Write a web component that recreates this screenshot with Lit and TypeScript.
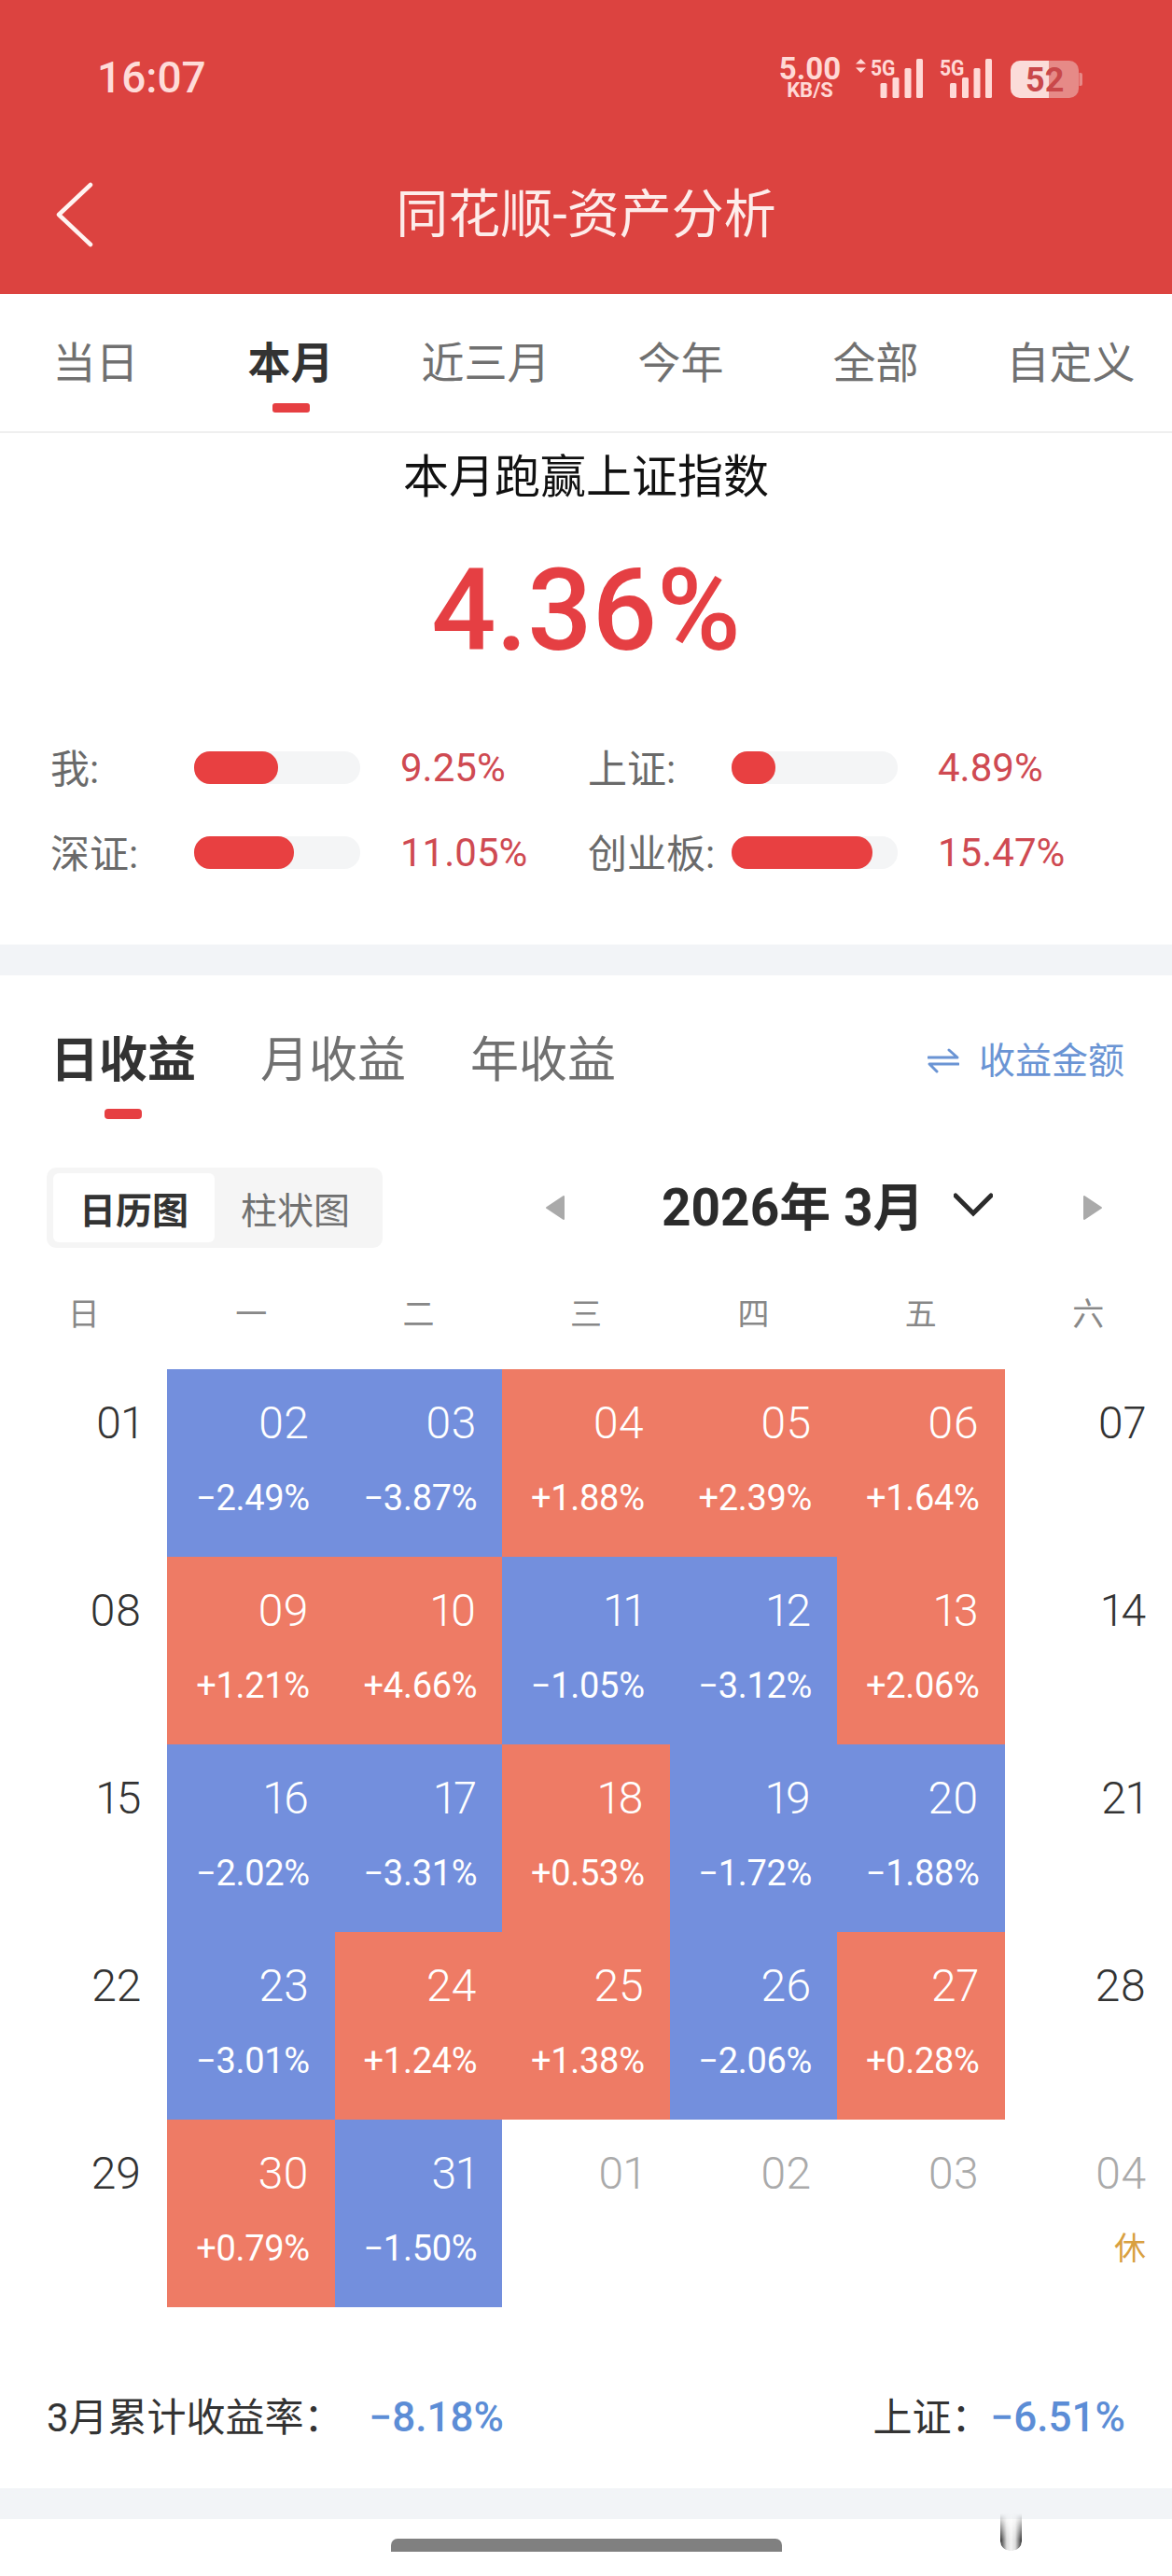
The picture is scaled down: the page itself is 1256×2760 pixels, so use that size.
import { LitElement, html, css, svg } from "lit";
import { customElement } from "lit/decorators.js";

type Day = { d: string; p?: string; other?: boolean; rest?: boolean };

const weeks: Day[][] = [
  [{ d: "01" }, { d: "02", p: "−2.49%" }, { d: "03", p: "−3.87%" }, { d: "04", p: "+1.88%" }, { d: "05", p: "+2.39%" }, { d: "06", p: "+1.64%" }, { d: "07" }],
  [{ d: "08" }, { d: "09", p: "+1.21%" }, { d: "10", p: "+4.66%" }, { d: "11", p: "−1.05%" }, { d: "12", p: "−3.12%" }, { d: "13", p: "+2.06%" }, { d: "14" }],
  [{ d: "15" }, { d: "16", p: "−2.02%" }, { d: "17", p: "−3.31%" }, { d: "18", p: "+0.53%" }, { d: "19", p: "−1.72%" }, { d: "20", p: "−1.88%" }, { d: "21" }],
  [{ d: "22" }, { d: "23", p: "−3.01%" }, { d: "24", p: "+1.24%" }, { d: "25", p: "+1.38%" }, { d: "26", p: "−2.06%" }, { d: "27", p: "+0.28%" }, { d: "28" }],
  [{ d: "29" }, { d: "30", p: "+0.79%" }, { d: "31", p: "−1.50%" }, { d: "01", other: true }, { d: "02", other: true }, { d: "03", other: true }, { d: "04", other: true, rest: true }],
];

const bars = [
  { label: "我:", width: 90, value: "9.25%" },
  { label: "上证:", width: 47, value: "4.89%" },
  { label: "深证:", width: 107, value: "11.05%" },
  { label: "创业板:", width: 151, value: "15.47%" },
];

const periods = ["当日", "本月", "近三月", "今年", "全部", "自定义"];

const signal = (xs: number[]) => {
  const tops = [89, 83, 73, 63];
  return xs.map((x, i) => svg`<rect x=${x} y=${tops[i]} width="7" height=${105 - tops[i]} rx="1.5" fill="#ffd9d6"></rect>`);
};

@customElement("app-root")
export class AppRoot extends LitElement {
  static styles = css`
    :host {
      display: block;
      width: 1256px;
      height: 2760px;
      position: relative;
      overflow: hidden;
      background: #fff;
      font-family: Roboto, "Noto Sans CJK SC", sans-serif;
      color: #333;
    }
    .header { height: 315px; background: #dc4340; display: flex; flex-direction: column; }
    .status { display: flex; align-items: flex-start; padding: 57px 96px 0 104px; height: 53px; }
    .time { font-size: 46px; line-height: 52px; font-weight: 500; color: #fedcd9; }
    .speed { margin-left: auto; width: 70px; padding-top: 3px; display: flex; flex-direction: column; align-items: center; font-weight: 700; color: #ffd9d6; }
    .speed b { font-size: 33px; line-height: 27px; font-weight: 700; }
    .speed span { font-size: 22px; line-height: 17px; margin-top: 1px; }
    .status-icons { display: block; width: 247px; height: 60px; margin-left: 10px; margin-top: -7px; }
    .title-row { display: grid; grid-template-columns: 120px 1fr 120px; align-items: center; margin-top: 72px; height: 96px; }
    .back { display: block; width: 44px; height: 72px; margin-left: 58px; }
    .title { text-align: center; font-size: 56px; line-height: 70px; color: #fdecea; font-weight: 400; white-space: nowrap; }

    .periods { display: grid; grid-template-columns: repeat(6, 209px); margin-left: -2px; height: 149px; box-sizing: border-box; padding-top: 44px; border-bottom: 2px solid #efefef; width: 1258px; }
    .period { display: flex; flex-direction: column; align-items: center; font-size: 46px; line-height: 60px; color: #707070; }
    .period.on { color: #333; font-weight: 700; }
    .period i { display: block; width: 40px; height: 10px; border-radius: 3px; background: #e63f42; margin-top: 13px; }

    .summary { height: 548px; box-sizing: border-box; padding-top: 18px; }
    .sum-title { text-align: center; font-size: 49px; line-height: 60px; color: #111; }
    .big { text-align: center; margin-top: 43px; font-size: 122px; line-height: 140px; font-weight: 500; color: #e53f43; }
    .bars { display: grid; grid-template-columns: 576px 576px; row-gap: 56px; padding-left: 54px; margin-top: 80px; }
    .bar-item { display: flex; align-items: center; height: 35px; }
    .bar-label { width: 154px; font-size: 42px; color: #6a6a6a; white-space: nowrap; margin-top: -4px; }
    .track { width: 178px; height: 35px; border-radius: 17px; background: #f4f5f6; }
    .fill { height: 35px; border-radius: 17px; background: #e84041; }
    .bar-value { margin-left: 43px; font-size: 42px; color: #cf4a52; }

    .band { height: 33px; background: #f2f4f7; }

    .kinds { display: flex; align-items: flex-start; padding: 62px 51px 0 54px; height: 87px; font-size: 52px; line-height: 60px; color: #707070; }
    .kind { display: flex; flex-direction: column; align-items: center; margin-right: 69px; }
    .kind.on { color: #333; font-weight: 700; }
    .kind i { display: block; width: 40px; height: 11px; border-radius: 4px; background: #e63f42; margin-top: 21px; }
    .switch { margin-left: auto; display: flex; align-items: center; gap: 21px; font-size: 39px; color: #6a94d4; }
    .switch svg { display: block; width: 34px; height: 28px; }

    .toolbar { display: flex; align-items: center; margin: 57px 0 0 50px; }
    .seg { display: flex; padding: 6px 7px; border-radius: 10px; background: #f5f5f5; }
    .seg span { width: 173px; height: 74px; display: flex; align-items: center; justify-content: center; font-size: 39px; color: #707070; border-radius: 6px; }
    .seg span.on { background: #fff; color: #333; font-weight: 700; }
    .tri { display: block; width: 22px; height: 28px; }
    .tri.prev { margin-left: 174px; }
    .month { margin-left: 103px; width: 283px; font-size: 55px; line-height: 70px; font-weight: 700; white-space: nowrap; color: #2b2b2b; }
    .chev { display: block; width: 42px; height: 26px; margin: -6px 0 0 30px; }
    .tri.next { margin-left: 96px; }

    .weekdays { display: grid; grid-template-columns: repeat(7, 1fr); margin-top: 46px; font-size: 34px; line-height: 50px; color: #888; text-align: center; }

    .grid { display: grid; grid-template-columns: repeat(7, 1fr); grid-auto-rows: 201px; margin-top: 34px; }
    .cell { box-sizing: border-box; padding: 28px 28px 0 0; text-align: right; color: #333; }
    .cell.up { background: #ee7b65; color: #fff; }
    .cell.down { background: #738fdd; color: #fff; }
    .cell.other { color: #aaa; }
    .num { font-size: 48px; line-height: 60px; font-weight: 300; font-feature-settings: "pnum"; }
    .pct { margin-top: 25px; margin-right: -1px; font-size: 38px; line-height: 50px; font-weight: 400; letter-spacing: -0.3px; }
    .rest { margin-top: 25px; font-size: 34px; line-height: 50px; color: #d9a040; }

    .totals { display: flex; justify-content: space-between; padding: 0 50px; margin-top: 88px; height: 106px; font-size: 42px; line-height: 60px; color: #333; }
    .totals b { font-weight: 500; font-size: 44px; color: #5c8dd6; }
    .totals .spaced { margin-left: 28px; }

    .nav { display: flex; justify-content: center; padding-top: 21px; }
    .nav i { display: block; width: 419px; height: 14px; border-radius: 7px 7px 0 0; background: #808080; }
    .glitch { position: absolute; left: 1072px; top: 2693px; width: 23px; height: 40px; border-radius: 0 0 10px 10px; background: linear-gradient(to right, #333, #ddd 30%, #f2f2f2 50%, #ddd 70%, #333); -webkit-mask-image: linear-gradient(to bottom, transparent, #000 70%); mask-image: linear-gradient(to bottom, transparent, #000 70%); }
  `;

  private renderCell(day: Day) {
    const tone = day.p ? (day.p.startsWith("+") ? "up" : "down") : "";
    return html`<div class="cell ${tone} ${day.other ? "other" : ""}">
      <div class="num">${day.d}</div>
      ${day.p ? html`<div class="pct">${day.p}</div>` : ""}
      ${day.rest ? html`<div class="rest">休</div>` : ""}
    </div>`;
  }

  render() {
    return html`
      <div class="header">
        <div class="status">
          <span class="time">16:07</span>
          <div class="speed"><b>5.00</b><span>KB/S</span></div>
          <svg class="status-icons" viewBox="913 50 247 60" font-family="Roboto, sans-serif" font-weight="700" fill="#ffd9d6">
            <path d="M917 68.5 L922.5 63 L928 68.5 Z M917 72.5 L922.5 78 L928 72.5 Z"></path>
            <text transform="translate(933 81) scale(.88 1)" font-size="24">5G</text>
            ${signal([943.5, 956.5, 969.5, 982])}
            <text transform="translate(1007 81) scale(.88 1)" font-size="24">5G</text>
            ${signal([1018, 1031, 1043.5, 1056])}
            <path d="M1124 65 H1146 a10 10 0 0 1 10 10 V95 a10 10 0 0 1 -10 10 H1124 Z" fill="#e68a87"></path>
            <path d="M1124 65 H1093 a10 10 0 0 0 -10 10 V95 a10 10 0 0 0 10 10 H1124 Z" fill="#fbdcd9"></path>
            <path d="M1156.5 78 h1.5 a2 2 0 0 1 2 2 v10 a2 2 0 0 1 -2 2 h-1.5 Z" fill="#e68a87"></path>
            <text x="1099" y="98" font-size="36" fill="#c9484a">52</text>
          </svg>
        </div>
        <div class="title-row">
          <svg class="back" viewBox="0 0 44 72" fill="none" stroke="#fff4f2" stroke-width="4.5" stroke-linecap="round" stroke-linejoin="round"><path d="M39 4 L5 36 L39 68"></path></svg>
          <div class="title">同花顺-资产分析</div>
          <span></span>
        </div>
      </div>

      <div class="periods">
        ${periods.map((p, i) => html`<div class="period ${i === 1 ? "on" : ""}">${p}${i === 1 ? html`<i></i>` : ""}</div>`)}
      </div>

      <div class="summary">
        <div class="sum-title">本月跑赢上证指数</div>
        <div class="big">4.36%</div>
        <div class="bars">
          ${bars.map(
            (b) => html`<div class="bar-item">
              <span class="bar-label">${b.label}</span>
              <div class="track"><div class="fill" style="width:${b.width}px"></div></div>
              <span class="bar-value">${b.value}</span>
            </div>`
          )}
        </div>
      </div>

      <div class="band"></div>

      <div class="kinds">
        <div class="kind on">日收益<i></i></div>
        <div class="kind">月收益</div>
        <div class="kind">年收益</div>
        <div class="switch">
          <svg viewBox="0 0 34 28" fill="none" stroke="#6a94d4" stroke-width="3" stroke-linecap="round" stroke-linejoin="round"><path d="M1 10 H32 L23 2"></path><path d="M33 17 H2 L10 25"></path></svg>
          <span>收益金额</span>
        </div>
      </div>

      <div class="toolbar">
        <div class="seg"><span class="on">日历图</span><span>柱状图</span></div>
        <svg class="tri prev" viewBox="0 0 22 28" fill="#aaa" stroke="#aaa" stroke-width="2" stroke-linejoin="round"><path d="M20 2 L2 14 L20 26 Z"></path></svg>
        <div class="month">2026年 3月</div>
        <svg class="chev" viewBox="0 0 42 26" fill="none" stroke="#2b2b2b" stroke-width="5" stroke-linecap="round"><path d="M2 3 L21 22 L40 3"></path></svg>
        <svg class="tri next" viewBox="0 0 22 28" fill="#aaa" stroke="#aaa" stroke-width="2" stroke-linejoin="round"><path d="M2 2 L20 14 L2 26 Z"></path></svg>
      </div>

      <div class="weekdays">
        <span>日</span><span>一</span><span>二</span><span>三</span><span>四</span><span>五</span><span>六</span>
      </div>

      <div class="grid">
        ${weeks.flat().map((d) => this.renderCell(d))}
      </div>

      <div class="totals">
        <div>3月累计收益率：<b class="spaced">−8.18%</b></div>
        <div>上证：<b>−6.51%</b></div>
      </div>

      <div class="band"></div>
      <div class="nav"><i></i></div>
      <div class="glitch"></div>
    `;
  }
}
